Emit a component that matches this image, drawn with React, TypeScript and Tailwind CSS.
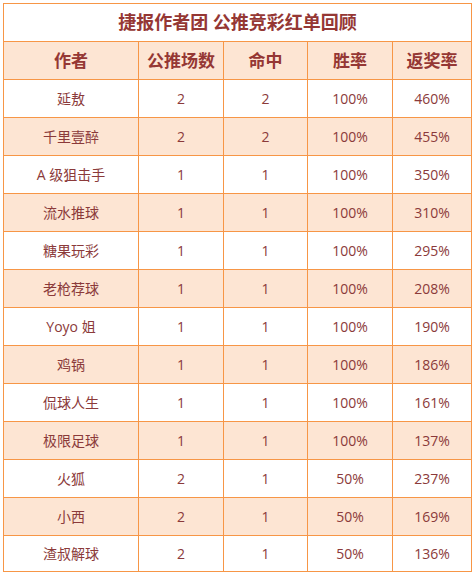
const rows: [string, number, number, string, string][] = [
  ['延敖', 2, 2, '100%', '460%'],
  ['千里壹醉', 2, 2, '100%', '455%'],
  ['A 级狙击手', 1, 1, '100%', '350%'],
  ['流水推球', 1, 1, '100%', '310%'],
  ['糖果玩彩', 1, 1, '100%', '295%'],
  ['老枪荐球', 1, 1, '100%', '208%'],
  ['Yoyo 姐', 1, 1, '100%', '190%'],
  ['鸡锅', 1, 1, '100%', '186%'],
  ['侃球人生', 1, 1, '100%', '161%'],
  ['极限足球', 1, 1, '100%', '137%'],
  ['火狐', 2, 1, '50%', '237%'],
  ['小西', 2, 1, '50%', '169%'],
  ['渣叔解球', 2, 1, '50%', '136%'],
];

const headers = ['作者', '公推场数', '命中', '胜率', '返奖率'];

export default function App() {
  return (
    <div className="min-h-[575px] bg-white pl-[3px] pt-[3px] font-['Open_Sans','Noto_Sans_CJK_SC',sans-serif]">
      <table className="w-[468px] table-fixed border-collapse text-center">
        <colgroup>
          <col className="w-[135px]" />
          <col className="w-[85px]" />
          <col className="w-[84px]" />
          <col className="w-[85px]" />
          <col className="w-[79px]" />
        </colgroup>
        <thead>
          <tr className="h-[38px]">
            <th colSpan={5} className="border border-[#f79646] bg-white p-0 text-[18px] font-bold text-[#953734]">
              捷报作者团 公推竞彩红单回顾
            </th>
          </tr>
          <tr className="h-[38px] bg-[#fde5d3]">
            {headers.map((h) => (
              <th key={h} className="border border-[#f79646] p-0 text-[17px] font-bold text-[#953734]">
                {h}
              </th>
            ))}
          </tr>
        </thead>
        <tbody>
          {rows.map((r, i) => (
            <tr
              key={r[0]}
              className={`${i === rows.length - 1 ? 'h-[36px]' : 'h-[38px]'} ${i % 2 === 1 ? 'bg-[#fde5d3]' : 'bg-white'}`}
            >
              {r.map((c, j) => (
                <td key={j} className="border border-[#f79646] p-0 text-[14px] text-[#8b3a3a]">
                  {c}
                </td>
              ))}
            </tr>
          ))}
        </tbody>
      </table>
    </div>
  );
}
